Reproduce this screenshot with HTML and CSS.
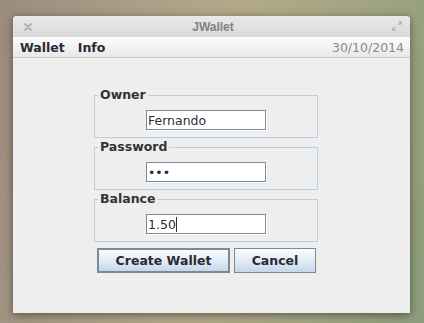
FILE: index.html
```html
<!DOCTYPE html>
<html lang="en">
<head>
    <meta charset="UTF-8">
    <title>JWallet</title>
    <link rel="stylesheet" href="styles.css">
</head>
<body>
    <div class="window">
        <div class="titlebar">
            <span class="tb-close">
                <svg width="8" height="8" viewBox="0 0 8 8"><path d="M1 1L7 7M7 1L1 7" stroke="#b0b0b0" stroke-width="1.8" stroke-linecap="round"/></svg>
            </span>
            <span class="tb-title">JWallet</span>
            <span class="tb-max">
                <svg width="10" height="10" viewBox="0 0 10 10">
                    <path d="M5.5 0H10V4.5Z M0 5.5V10H4.5Z" fill="#bdbdbd"/>
                    <path d="M8.5 1.5L6 4M1.5 8.5L4 6" stroke="#bdbdbd" stroke-width="1.2"/>
                </svg>
            </span>
        </div>

        <div class="menubar">
            <span class="menu">Wallet</span>
            <span class="menu">Info</span>
            <span class="date">30/10/2014</span>
        </div>

        <div class="content">
            <fieldset class="group">
                <legend>Owner</legend>
                <input class="field" type="text" value="Fernando">
            </fieldset>
            <fieldset class="group">
                <legend>Password</legend>
                <input class="field" type="password" value="abc">
            </fieldset>
            <fieldset class="group">
                <legend>Balance</legend>
                <!-- caret drawn as a background line after the text -->
                <input class="field has-caret" type="text" value="1.50">
            </fieldset>

            <div class="buttons">
                <button class="button default">Create Wallet</button>
                <button class="button cancel">Cancel</button>
            </div>
        </div>
    </div>
</body>
</html>
```

FILE: styles.css
```css
* {
    box-sizing: border-box;
}

body {
    margin: 0;
    height: 323px;
    overflow: hidden;
    padding: 16px 0 0 13px;
    font-family: "DejaVu Sans", sans-serif;
    background: linear-gradient(100deg, #9b8b7e 0%, #ab9f87 30%, #b3a988 50%, #a3a582 75%, #8c9c7a 100%);
}

.window {
    width: 397px;
    height: 297px;
    background: #eeeeee;
    border-radius: 4px 4px 0 0;
    box-shadow: 0 2px 9px rgba(0, 0, 0, 0.45);
    display: flex;
    flex-direction: column;
}

.titlebar {
    height: 21px;
    display: grid;
    grid-template-columns: 1fr auto 1fr;
    align-items: center;
    padding: 0 8px 0 11px;
    border-radius: 4px 4px 0 0;
    background: linear-gradient(#e9e9e9, #dadada);
}

.tb-close {
    display: flex;
}

.tb-title {
    font-family: "Liberation Sans", sans-serif;
    font-weight: bold;
    font-size: 12px;
    color: #828282;
    padding-top: 1px;
}

.tb-max {
    display: flex;
    justify-content: flex-end;
    margin-top: -2px;
}

.menubar {
    height: 21px;
    display: flex;
    align-items: center;
    padding: 0 6px 0 7px;
    background: linear-gradient(#fdfdfd, #e8e8e8);
    border-bottom: 1px solid #c8c8c8;
}

.menu {
    font-weight: bold;
    font-size: 12.5px;
    color: #2a2a33;
    margin-right: 13px;
}

.date {
    margin-left: auto;
    font-size: 12.5px;
    color: #8a8a8a;
}

.content {
    padding: 30px 0 0 81px;
}

.group {
    width: 224px;
    margin: 0 0 2px;
    padding: 8px 3px 7px;
    border: 1px solid #b8cfe5;
}

.group legend {
    padding: 0 2px;
    font-weight: bold;
    font-size: 12.5px;
    line-height: 14px;
    color: #333333;
}

.field {
    display: block;
    width: 120px;
    height: 20px;
    margin: 0 auto;
    padding: 0 1px;
    border: 1px solid #7a8a99;
    box-shadow: 1px 1px 0 #ffffff;
    background: #ffffff;
    font-family: "DejaVu Sans", sans-serif;
    font-size: 12.5px;
    color: #2e2e38;
    outline: none;
}

.field.has-caret {
    background: linear-gradient(#333333, #333333) no-repeat 29px 2px / 1px 15px, #ffffff;
}

.buttons {
    display: flex;
    gap: 4px;
    margin-top: 6px;
    padding-left: 3px;
}

.button {
    height: 25px;
    border: 1px solid #7a8a99;
    border-radius: 0;
    padding: 0;
    background: linear-gradient(#fbfcfe, #dde8f3 60%, #c6d7ea);
    font-family: "DejaVu Sans", sans-serif;
    font-weight: bold;
    font-size: 12.5px;
    color: #2a2a33;
}

.button.default {
    width: 133px;
    border-width: 2px;
}

.button.cancel {
    width: 82px;
}
```
